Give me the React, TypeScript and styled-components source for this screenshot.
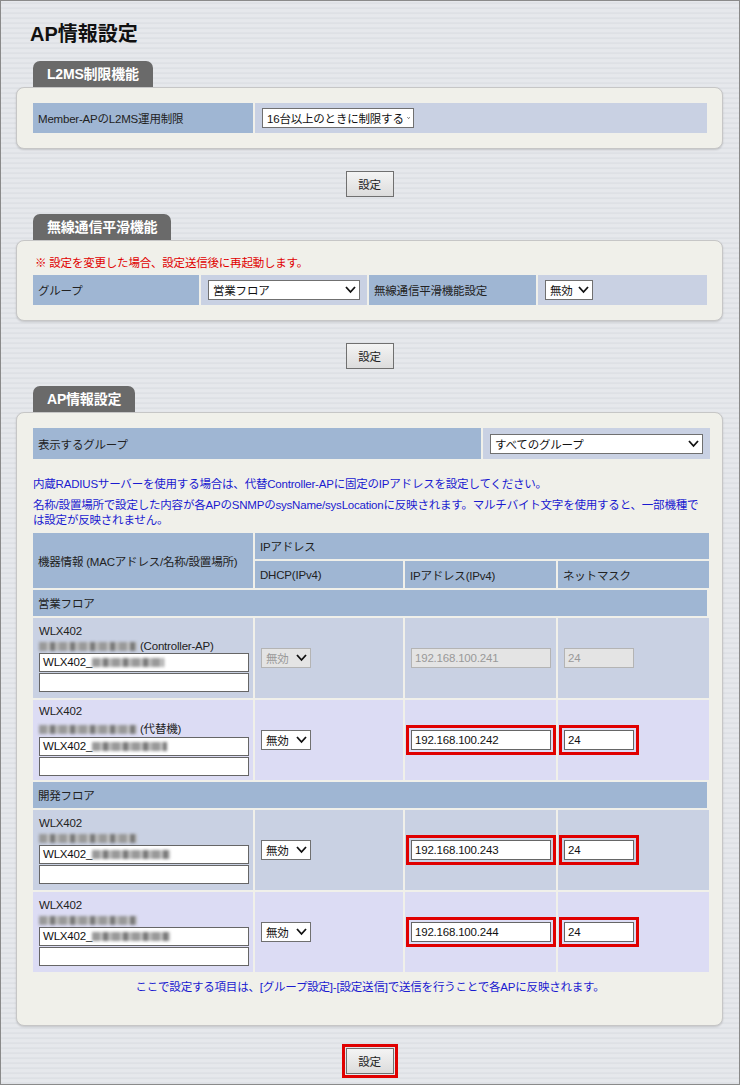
import React from "react";
import styled, { createGlobalStyle } from "styled-components";

const G = createGlobalStyle`
  html, body { margin: 0; padding: 0; }
  body {
    font-family: "Liberation Sans", "Noto Sans CJK JP", sans-serif;
    font-size: 11.5px; color: #222; letter-spacing: -0.2px;
    background: repeating-linear-gradient(180deg, #e6e8ec 0px, #e6e8ec 2px, #dadde2 3px, #e9ebee 5px);
  }
`;

const Page = styled.div`
  width: 740px; height: 1085px; box-sizing: border-box; overflow: hidden;
  border: 1px solid #8a8a8a; padding: 13px 16px 0 15px;
`;
const Title = styled.h1`
  margin: 4px 0 14px 14px; font-size: 20px; font-weight: bold; color: #111; letter-spacing: 0;
`;
const Tab = styled.div`
  display: inline-block; margin-left: 17px; height: 26px; line-height: 27px;
  padding: 0 14px; background: #6a6a6a; color: #fff; font-weight: bold; font-size: 14px;
  border-radius: 7px 7px 0 0;
`;
const Panel = styled.div<{ $pt?: number; $pb?: number }>`
  background: #f0f0ea; border: 1px solid #c6c6c6; border-radius: 8px;
  box-shadow: 0 1px 2px rgba(0,0,0,0.15);
  padding: ${(p) => p.$pt ?? 15}px 15px ${(p) => p.$pb ?? 15}px 16px;
`;
const Row = styled.div<{ $cols: string; $h?: number }>`
  display: grid; grid-template-columns: ${(p) => p.$cols}; gap: 2px;
  min-height: ${(p) => p.$h ?? 30}px;
`;
const Label = styled.div`
  background: #9fb6d3; display: flex; align-items: center; padding: 0 5px; white-space: nowrap;
`;
const Value = styled.div`
  background: #c9d1e3; display: flex; align-items: center; padding: 0 7px;
`;
const Sel = styled.div<{ $w: number; $dis?: boolean }>`
  width: ${(p) => p.$w}px; height: 20px; box-sizing: border-box; white-space: nowrap; gap: 3px;
  border: 1px solid ${(p) => (p.$dis ? "#b4b4b4" : "#707070")};
  background: ${(p) => (p.$dis ? "#e4e4e4" : "#fff")}; color: ${(p) => (p.$dis ? "#999" : "#111")};
  display: flex; align-items: center; justify-content: space-between; padding: 0 3px 0 4px;
`;
const BtnWrap = styled.div`
  display: flex; justify-content: center; margin: 22px 0 17px;
`;
const Btn = styled.div<{ $hi?: boolean }>`
  width: 48px; height: 26px; box-sizing: border-box; border: 1px solid #707070;
  background: linear-gradient(#f4f4f4, #dcdcdc); display: flex; align-items: center; justify-content: center;
  outline: ${(p) => (p.$hi ? "3px solid #e00000" : "none")}; outline-offset: 1px;
`;
const Red = styled.div`color: #e00000; margin: 0 0 5px 2px;`;
const Blue = styled.div<{ $c?: boolean }>`
  color: #1a1ad0; line-height: 15px; margin: 6px 0 0 0; text-align: ${(p) => (p.$c ? "center" : "left")};
`;
const Cell = styled.div<{ $bg: string }>`
  background: ${(p) => p.$bg}; display: flex; flex-direction: column; justify-content: center;
  align-items: flex-start; padding: 0 6px; box-sizing: border-box;
`;
const Text = styled.div`
  width: 210px; height: 19px; box-sizing: border-box; border: 1px solid #666;
  padding: 2px 3px 0; margin-top: 1px; background: #fff; color: #111;
`;
const Blur = styled.span<{ $w: number }>`
  display: inline-block; width: ${(p) => p.$w}px; height: 9px; vertical-align: middle;
  background: repeating-linear-gradient(90deg, #999 0 8px, #c8c8c8 8px 11px, #777 11px 16px, #bbb 16px 20px);
  filter: blur(1.5px);
`;
const Hi = styled.div<{ $on: boolean }>`
  display: inline-flex; padding: 2px; border: 3px solid ${(p) => (p.$on ? "#e00000" : "transparent")};
  margin-left: -5px;
`;
const Box = styled.div<{ $w: number; $dis?: boolean }>`
  width: ${(p) => p.$w}px; height: 20px; box-sizing: border-box; padding: 0 3px;
  border: 1px solid ${(p) => (p.$dis ? "#b4b4b4" : "#666")}; display: flex; align-items: center;
  background: ${(p) => (p.$dis ? "#e4e4e4" : "#fff")}; color: ${(p) => (p.$dis ? "#999" : "#111")};
`;
const Stack = styled.div`display: flex; flex-direction: column; gap: 2px; margin-top: 5px;`;

const Chev = () => (
  <svg width="11" height="8" viewBox="0 0 11 8"><path d="M1 1l4.5 5L10 1" stroke="#111" strokeWidth="1.8" fill="none" /></svg>
);

const cols = "220px 148px 151px 151px";
const Hdr = styled.div`
  display: grid; grid-template-columns: ${cols}; grid-template-rows: 26px 27px; gap: 2px;
`;
type Dev = { mac: React.ReactNode; name: number; ip: string; dis?: boolean; bg: string };
const Device = ({ d }: { d: Dev }) => (
  <Row $cols={cols} $h={80}>
    <Cell $bg={d.bg}>
      <div>WLX402</div>
      <div style={{ marginTop: 3 }}>{d.mac}</div>
      <Text>WLX402_<Blur $w={d.name} /></Text>
      <Text />
    </Cell>
    <Cell $bg={d.bg}><Sel $w={50} $dis={d.dis}>無効<Chev /></Sel></Cell>
    <Cell $bg={d.bg}><Hi $on={!d.dis}><Box $w={140} $dis={d.dis}>{d.ip}</Box></Hi></Cell>
    <Cell $bg={d.bg}><Hi $on={!d.dis}><Box $w={70} $dis={d.dis}>24</Box></Hi></Cell>
  </Row>
);

const Group = ({ n }: { n: string }) => (
  <Row $cols="1fr" $h={26}><Label>{n}</Label></Row>
);

export default function App() {
  const g1 = "#c9d1e3", g2 = "#dcdcf4";
  return (
    <Page>
      <G />
      <Title>AP情報設定</Title>
      <Tab>L2MS制限機能</Tab>
      <Panel>
        <Row $cols="220px 1fr">
          <Label>Member-APのL2MS運用制限</Label>
          <Value><Sel $w={152}>16台以上のときに制限する<Chev /></Sel></Value>
        </Row>
      </Panel>
      <BtnWrap><Btn>設定</Btn></BtnWrap>
      <Tab>無線通信平滑機能</Tab>
      <Panel $pt={13}>
        <Red>※ 設定を変更した場合、設定送信後に再起動します。</Red>
        <Row $cols="166px 166px 167px 1fr">
          <Label>グループ</Label>
          <Value><Sel $w={158}>営業フロア<Chev /></Sel></Value>
          <Label>無線通信平滑機能設定</Label>
          <Value><Sel $w={48}>無効<Chev /></Sel></Value>
        </Row>
      </Panel>
      <BtnWrap><Btn>設定</Btn></BtnWrap>
      <Tab>AP情報設定</Tab>
      <Panel $pb={0}>
        <Row $cols="448px 1fr" $h={31}>
          <Label>表示するグループ</Label>
          <Value><Sel $w={213}>すべてのグループ<Chev /></Sel></Value>
        </Row>
        <Blue style={{ marginTop: 18 }}>内蔵RADIUSサーバーを使用する場合は、代替Controller-APに固定のIPアドレスを設定してください。</Blue>
        <Blue>名称/設置場所で設定した内容が各APのSNMPのsysName/sysLocationに反映されます。マルチバイト文字を使用すると、一部機種では設定が反映されません。</Blue>
        <Stack>
          <Hdr>
            <Label style={{ gridRow: "1 / 3" }}>機器情報 (MACアドレス/名称/設置場所)</Label>
            <Label style={{ gridColumn: "2 / 5" }}>IPアドレス</Label>
            <Label>DHCP(IPv4)</Label>
            <Label>IPアドレス(IPv4)</Label>
            <Label>ネットマスク</Label>
          </Hdr>
          <Group n="営業フロア" />
          <Device d={{ bg: g1, dis: true, ip: "192.168.100.241", name: 72, mac: <><Blur $w={98} /> (Controller-AP)</> }} />
          <Device d={{ bg: g2, ip: "192.168.100.242", name: 75, mac: <><Blur $w={98} /> (代替機)</> }} />
          <Group n="開発フロア" />
          <Device d={{ bg: g1, ip: "192.168.100.243", name: 78, mac: <Blur $w={98} /> }} />
          <Device d={{ bg: g2, ip: "192.168.100.244", name: 78, mac: <Blur $w={98} /> }} />
        </Stack>
        <Blue $c style={{ margin: "8px 0 30px" }}>ここで設定する項目は、[グループ設定]-[設定送信]で送信を行うことで各APに反映されます。</Blue>
      </Panel>
      <BtnWrap><Btn $hi>設定</Btn></BtnWrap>
    </Page>
  );
}
